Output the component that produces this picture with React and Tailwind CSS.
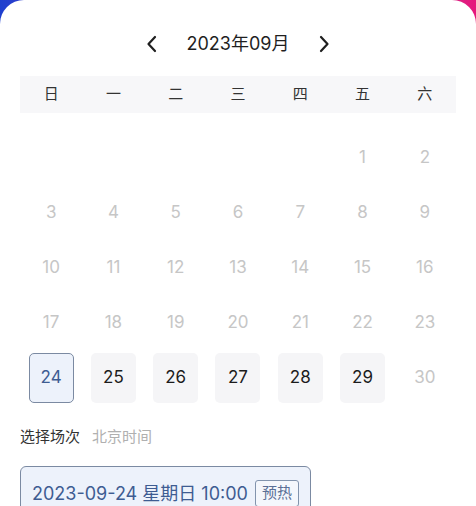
import React from 'react';

const weekDays = ['日', '一', '二', '三', '四', '五', '六'];

// September 2023 starts on Friday
const cells = [
  ...Array(5).fill(null),
  ...Array.from({ length: 30 }, (_, i) => i + 1),
];

const available = [25, 26, 27, 28, 29];
const selected = 24;

const ChevronLeft = () => (
  <svg width="12" height="18" viewBox="0 0 12 18" fill="none">
    <path d="M9 2L2.5 9L9 16" stroke="#1f1f1f" strokeWidth="2.2" strokeLinecap="round" strokeLinejoin="round" />
  </svg>
);

const ChevronRight = () => (
  <svg width="12" height="18" viewBox="0 0 12 18" fill="none">
    <path d="M3 2L9.5 9L3 16" stroke="#1f1f1f" strokeWidth="2.2" strokeLinecap="round" strokeLinejoin="round" />
  </svg>
);

const DayCell = ({ day }) => {
  if (!day) return <div className="h-[50px]" />;
  if (day === selected) {
    return (
      <div className="flex justify-center">
        <div className="w-[45px] h-[50px] flex items-center justify-center rounded-[5px] border border-[#7b8aa2] bg-[#edf2fb] text-[17px] text-[#3e5c92]">
          {day}
        </div>
      </div>
    );
  }
  if (available.includes(day)) {
    return (
      <div className="flex justify-center">
        <div className="w-[45px] h-[50px] flex items-center justify-center rounded-[5px] bg-[#f5f5f7] text-[17px] text-[#1c1c1c]">
          {day}
        </div>
      </div>
    );
  }
  return (
    <div className="flex justify-center">
      <div className="w-[45px] h-[50px] flex items-center justify-center text-[17px] text-[#c6c6c6]">
        {day}
      </div>
    </div>
  );
};

export default function App() {
  return (
    <div
      className="w-[476px] h-[506px] overflow-hidden bg-gradient-to-r from-[#1d3fcf] via-[#7a2ab0] to-[#e6167c]"
      style={{ fontFamily: 'Inter, "Noto Sans CJK SC", sans-serif' }}
    >
      <div className="h-full bg-white rounded-t-[24px] px-5">
        {/* month switcher */}
        <div className="pt-[31px] h-[76px] flex justify-center">
          <div className="flex items-center h-[26px]">
            <ChevronLeft />
            <span className="mx-[29px] text-[18px] text-[#1f1f1f] leading-none">2023年09月</span>
            <ChevronRight />
          </div>
        </div>

        {/* week header */}
        <div className="grid grid-cols-7 h-[37px] items-center bg-[#f7f7f9] text-[15px] text-[#333]">
          {weekDays.map((d) => (
            <div key={d} className="text-center">{d}</div>
          ))}
        </div>

        {/* dates */}
        <div className="mt-5 grid grid-cols-7 gap-y-[5px]">
          {cells.map((day, i) => (
            <DayCell key={i} day={day} />
          ))}
        </div>

        {/* session */}
        <div className="mt-[24px] flex items-center gap-3 h-5 text-[15px]">
          <span className="text-[#333]">选择场次</span>
          <span className="text-[#b0b0b0]">北京时间</span>
        </div>

        <div className="mt-[19px] w-[291px] h-[56px] rounded-[6px] border border-[#7b8aa2] bg-[#edf2fb] pl-[11px] pt-[13px] flex items-start gap-[7px]">
          <span className="text-[18px] leading-[28px] text-[#3e5c92]">2023-09-24 星期日 10:00</span>
          <span className="h-[27px] px-[6px] flex items-center rounded-[3px] border border-[#8294ad] text-[15px] text-[#5a6f96] bg-white/40">
            预热
          </span>
        </div>
      </div>
    </div>
  );
}
